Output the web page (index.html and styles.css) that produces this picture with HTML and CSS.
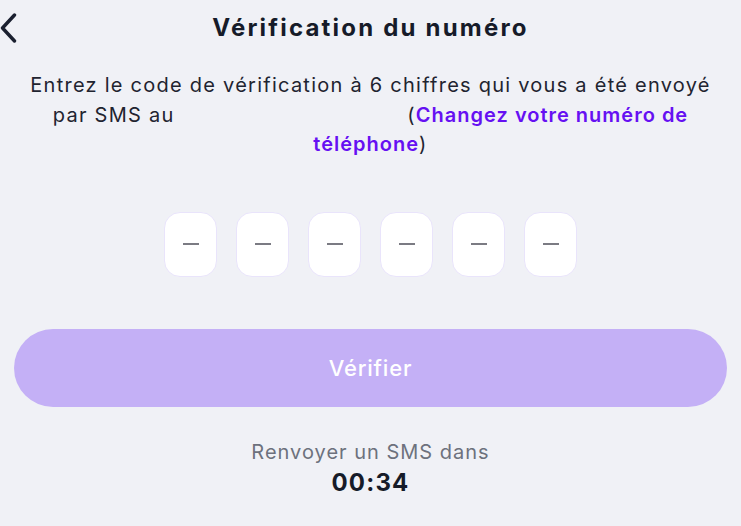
FILE: index.html
```html
<!DOCTYPE html>
<html lang="fr">
<head>
<meta charset="utf-8">
<link rel="stylesheet" href="styles.css">
</head>
<body>
<div class="page">
  <header class="header">
    <button class="back" aria-label="Retour">
      <svg width="18" height="30" viewBox="0 0 18 30"><path d="M14.5 2 L2.5 15 L14.5 28" fill="none" stroke="#1b2030" stroke-width="3.4" stroke-linecap="round" stroke-linejoin="round"/></svg>
    </button>
    <h1 class="title">Vérification du numéro</h1>
  </header>
  <p class="intro">Entrez le code de vérification à 6 chiffres qui vous a été envoyé par SMS au <span class="phone" aria-hidden="true"></span> (<a class="link" href="#">Changez votre numéro de téléphone</a>)</p>
  <div class="otp">
    <div class="cell"><span class="dash"></span></div>
    <div class="cell"><span class="dash"></span></div>
    <div class="cell"><span class="dash"></span></div>
    <div class="cell"><span class="dash"></span></div>
    <div class="cell"><span class="dash"></span></div>
    <div class="cell"><span class="dash"></span></div>
  </div>
  <button class="verify">Vérifier</button>
  <div class="resend">
    <div class="resend-label">Renvoyer un SMS dans</div>
    <div class="timer">00:34</div>
  </div>
</div>
</body>
</html>
```
FILE: styles.css
```css
* { box-sizing: border-box; }
html, body { margin: 0; padding: 0; }
body {
  background: #f0f1f6;
  font-family: Inter, "Noto Sans", sans-serif;
  color: #1c2130;
  width: 741px;
  height: 526px;
  overflow: hidden;
}
.page { display: flex; flex-direction: column; align-items: center; }
.header {
  position: relative;
  width: 100%;
  height: 56px;
  display: flex;
  align-items: center;
  justify-content: center;
}
.back {
  position: absolute;
  left: 0;
  top: 13px;
  padding: 0;
  border: 0;
  background: none;
  display: flex;
}
.title {
  margin: 0;
  font-size: 24px;
  line-height: 30px;
  font-weight: 700;
  color: #161b29;
  letter-spacing: 2.2px;
}
.intro {
  margin: 15px 0 0;
  width: 700px;
  text-align: center;
  font-size: 20px;
  line-height: 29.5px;
  letter-spacing: 1.25px;
  color: #1f2430;
}
.phone {
  display: inline-block;
  width: 219px;
  height: 1px;
}
.link { color: #6610f2; font-weight: 600; text-decoration: none; letter-spacing: 1px; }
.otp {
  display: flex;
  gap: 19px;
  margin-top: 52px;
}
.cell {
  width: 53px;
  height: 65px;
  background: #fff;
  border: 1px solid #e9e4fb;
  border-radius: 16px;
  display: flex;
  align-items: center;
  justify-content: center;
}
.dash { width: 16px; height: 2px; background: #7b7b83; }
.verify {
  margin-top: 52px;
  width: 713px;
  height: 78px;
  border: 0;
  border-radius: 39px;
  background: #c4b0f6;
  color: #fff;
  font-family: inherit;
  font-size: 22px;
  font-weight: 500;
  letter-spacing: 0.8px;
}
.resend { margin-top: 32px; text-align: center; }
.resend-label { font-size: 20px; color: #6d717d; line-height: 26px; letter-spacing: 1px; }
.timer { font-size: 24px; font-weight: 700; color: #161b29; line-height: 36px; letter-spacing: 1.2px; }
```
